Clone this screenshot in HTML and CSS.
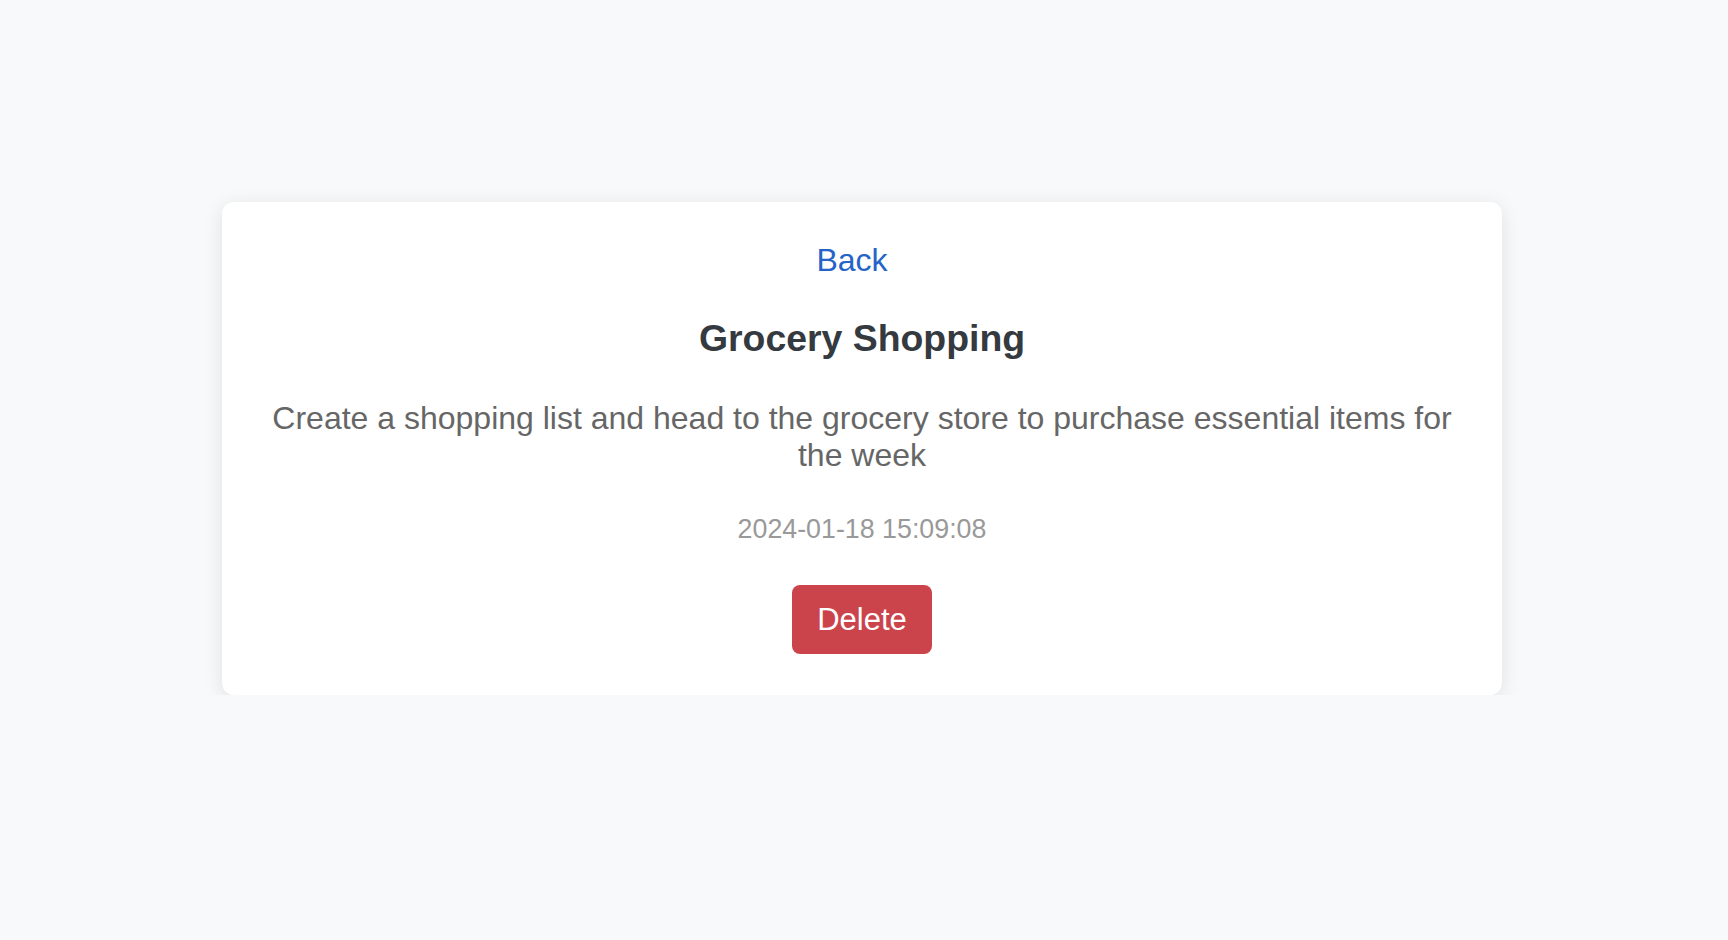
FILE: index.html
```html
<!DOCTYPE html>
<html lang="en">
<head>
<meta charset="utf-8">
<title>Grocery Shopping</title>
<link rel="stylesheet" href="styles.css">
</head>
<body>
<main class="page">
  <section class="card">
    <div class="back-row"><a class="back" href="#">Back</a></div>
    <h1 class="title">Grocery Shopping</h1>
    <p class="desc">Create a shopping list and head to the grocery store to purchase essential items for the week</p>
    <p class="date">2024-01-18 15:09:08</p>
    <button class="delete" type="button">Delete</button>
  </section>
</main>
</body>
</html>
```

FILE: styles.css
```css
html, body {
  margin: 0;
  padding: 0;
}
body {
  background: #f8f9fa;
  font-family: "Liberation Sans", Arial, Helvetica, sans-serif;
}
.page {
  display: flex;
  justify-content: center;
  padding-top: 202px;
  padding-right: 4px;
}
.card {
  width: 1280px;
  box-sizing: border-box;
  background: #ffffff;
  border-radius: 12px;
  box-shadow: 0 4px 20px rgba(0, 0, 0, 0.1);
  padding: 40px 40px 41px;
  display: flex;
  flex-direction: column;
  align-items: center;
  text-align: center;
}
.back-row {
  padding-right: 20px;
}
.back {
  font-size: 32px;
  color: #2563c7;
  text-decoration: none;
}
.title {
  margin: 38px 0 0;
  font-size: 37.4px;
  font-weight: 700;
  color: #343a40;
}
.desc {
  margin: 40px 0 0;
  font-size: 32px;
  color: #666666;
}
.date {
  margin: 40px 0 0;
  font-size: 26.8px;
  color: #999999;
}
.delete {
  margin-top: 40px;
  font-family: inherit;
  font-size: 31px;
  color: #ffffff;
  background: #cc444b;
  border: none;
  border-radius: 8px;
  padding: 16.5px 25px;
  cursor: pointer;
}
```
